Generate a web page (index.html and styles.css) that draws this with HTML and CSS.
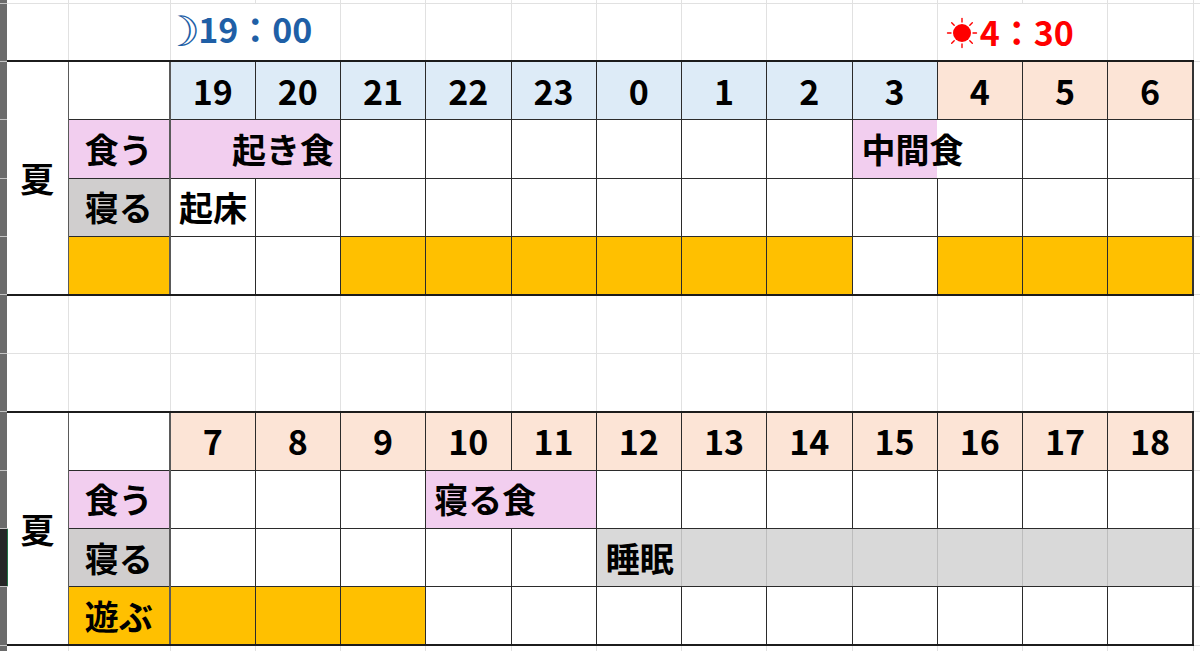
FILE: index.html
```html
<!DOCTYPE html>
<html lang="ja">
<head>
<meta charset="utf-8">
<title>夏 スケジュール</title>
<link rel="stylesheet" href="styles.css">
</head>
<body>
<table class="sheet">
<colgroup>
<col class="w-rh"><col class="w-a"><col class="w-b">
<col class="w-h"><col class="w-h"><col class="w-h"><col class="w-h"><col class="w-h"><col class="w-h">
<col class="w-h"><col class="w-h"><col class="w-h"><col class="w-h"><col class="w-h"><col class="w-h">
<col class="w-x">
</colgroup>
<tbody>
<tr class="top">
<td class="rh"></td><td class="g"></td><td class="g"></td>
<td class="g"></td><td class="g"></td><td class="g"></td><td class="g"></td><td class="g"></td><td class="g"></td>
<td class="g"></td><td class="g"></td><td class="g"></td><td class="g"></td><td class="g"></td><td class="g"></td>
<td class="g"></td>
</tr>
<tr class="r">
<td class="rh"></td><td class="g tb"></td><td class="g tb"></td>
<td class="g tb nr note moon"><span class="moon-g">☽</span>19：00</td>
<td class="g tb"></td><td class="g tb"></td><td class="g tb"></td><td class="g tb"></td><td class="g tb"></td><td class="g tb"></td><td class="g tb"></td><td class="g tb"></td>
<td class="g tb nr note sun"><svg class="sun-ic" width="32" height="32" viewBox="0 0 32 32"><circle cx="16" cy="16" r="9" fill="#ff0000"/><g stroke="#ff0000" stroke-width="1.4" stroke-linecap="round"><line x1="16" y1="1.5" x2="16" y2="5"/><line x1="16" y1="27" x2="16" y2="30.5"/><line x1="1.5" y1="16" x2="5" y2="16"/><line x1="27" y1="16" x2="30.5" y2="16"/><line x1="5.7" y1="5.7" x2="8.2" y2="8.2"/><line x1="23.8" y1="23.8" x2="26.3" y2="26.3"/><line x1="26.3" y1="5.7" x2="23.8" y2="8.2"/><line x1="8.2" y1="23.8" x2="5.7" y2="26.3"/></g></svg>4：30</td>
<td class="g tb"></td><td class="g tb"></td>
<td class="g"></td>
</tr>
<tr class="r">
<td class="rh"></td>
<td class="season" rowspan="4">夏</td>
<td class="c lbl"></td>
<td class="c blue">19</td><td class="c blue">20</td><td class="c blue">21</td><td class="c blue">22</td><td class="c blue">23</td><td class="c blue">0</td>
<td class="c blue">1</td><td class="c blue">2</td><td class="c blue">3</td><td class="c peach">4</td><td class="c peach">5</td><td class="c peach last">6</td>
<td class="g"></td>
</tr>
<tr class="r">
<td class="rh"></td>
<td class="c lbl pink">食う</td>
<td class="c pink ra" colspan="2">起き食</td>
<td class="c"></td><td class="c"></td><td class="c"></td><td class="c"></td><td class="c"></td><td class="c"></td>
<td class="c pink nr la-10">中間食</td>
<td class="c"></td><td class="c"></td><td class="c last"></td>
<td class="g"></td>
</tr>
<tr class="r">
<td class="rh"></td>
<td class="c lbl gray">寝る</td>
<td class="c la-8">起床</td>
<td class="c"></td><td class="c"></td><td class="c"></td><td class="c"></td><td class="c"></td>
<td class="c"></td><td class="c"></td><td class="c"></td><td class="c"></td><td class="c"></td><td class="c last"></td>
<td class="g"></td>
</tr>
<tr class="r">
<td class="rh"></td>
<td class="c lbl orange tb"></td>
<td class="c tb"></td><td class="c tb"></td>
<td class="c orange tb"></td><td class="c orange tb"></td><td class="c orange tb"></td><td class="c orange tb"></td><td class="c orange tb"></td><td class="c orange tb"></td>
<td class="c tb"></td>
<td class="c orange tb"></td><td class="c orange tb"></td><td class="c orange tb last"></td>
<td class="g"></td>
</tr>
<tr class="r">
<td class="rh"></td><td class="g"></td><td class="g"></td>
<td class="g"></td><td class="g"></td><td class="g"></td><td class="g"></td><td class="g"></td><td class="g"></td>
<td class="g"></td><td class="g"></td><td class="g"></td><td class="g"></td><td class="g"></td><td class="g"></td>
<td class="g"></td>
</tr>
<tr class="r">
<td class="rh"></td><td class="g tb"></td><td class="g tb"></td>
<td class="g tb"></td><td class="g tb"></td><td class="g tb"></td><td class="g tb"></td><td class="g tb"></td><td class="g tb"></td>
<td class="g tb"></td><td class="g tb"></td><td class="g tb"></td><td class="g tb"></td><td class="g tb"></td><td class="g tb"></td>
<td class="g"></td>
</tr>
<tr class="r">
<td class="rh"></td>
<td class="season" rowspan="4">夏</td>
<td class="c lbl"></td>
<td class="c peach">7</td><td class="c peach">8</td><td class="c peach">9</td><td class="c peach">10</td><td class="c peach">11</td><td class="c peach">12</td>
<td class="c peach">13</td><td class="c peach">14</td><td class="c peach">15</td><td class="c peach">16</td><td class="c peach">17</td><td class="c peach last">18</td>
<td class="g"></td>
</tr>
<tr class="r">
<td class="rh"></td>
<td class="c lbl pink">食う</td>
<td class="c"></td><td class="c"></td><td class="c"></td>
<td class="c pink la-8" colspan="2">寝る食</td>
<td class="c"></td><td class="c"></td><td class="c"></td><td class="c"></td><td class="c"></td><td class="c"></td>
<td class="c last"></td>
<td class="g"></td>
</tr>
<tr class="r">
<td class="rh sel"></td>
<td class="c lbl gray">寝る</td>
<td class="c"></td><td class="c"></td><td class="c"></td><td class="c"></td><td class="c"></td>
<td class="c sgray lr la-9">睡眠</td>
<td class="c sgray lr"></td><td class="c sgray lr"></td><td class="c sgray lr"></td><td class="c sgray lr"></td><td class="c sgray lr"></td>
<td class="c sgray last"></td>
<td class="g"></td>
</tr>
<tr class="r">
<td class="rh"></td>
<td class="c lbl orange tb">遊ぶ</td>
<td class="c orange tb"></td><td class="c orange tb"></td><td class="c orange tb"></td>
<td class="c tb"></td><td class="c tb"></td><td class="c tb"></td><td class="c tb"></td><td class="c tb"></td><td class="c tb"></td><td class="c tb"></td><td class="c tb"></td>
<td class="c tb last"></td>
<td class="g"></td>
</tr>
<tr class="end">
<td class="rh"></td><td class="g"></td><td class="g"></td>
<td class="g"></td><td class="g"></td><td class="g"></td><td class="g"></td><td class="g"></td><td class="g"></td>
<td class="g"></td><td class="g"></td><td class="g"></td><td class="g"></td><td class="g"></td><td class="g"></td>
<td class="g"></td>
</tr>
</tbody>
</table>
</body>
</html>
```
FILE: styles.css
```css
html, body {
  margin: 0;
  padding: 0;
  background: #ffffff;
  overflow: hidden;
}

.sheet {
  border-collapse: collapse;
  table-layout: fixed;
  width: 1200px;
  font-family: "Noto Sans CJK JP", "Noto Sans", sans-serif;
  font-weight: 700;
  font-size: 34px;
  color: #000000;
}

.w-rh { width: 7px; }
.w-a { width: 61px; }
.w-b { width: 102px; }
.w-h { width: 85.25px; }
.w-x { width: 7px; }

.sheet tr.top { height: 3px; }
.sheet tr.r { height: 58.4px; }
.sheet tr.end { height: 8px; }

.sheet td {
  padding: 0;
  border: none;
  border-right: 1px solid #e1e1e1;
  border-bottom: 1px solid #e1e1e1;
  text-align: center;
  vertical-align: middle;
  white-space: nowrap;
  overflow: visible;
  line-height: 1;
}

.sheet td.rh {
  background: #6b6b6b;
  border-right: none;
  border-bottom: 1px solid #c4c4c4;
}
.sheet td.rh.sel {
  background: #262626;
  border-right: 1px solid #217346;
}

.sheet td.c {
  border-right: 1px solid #2b2b2b;
  border-bottom: 1px solid #2b2b2b;
}
.sheet td.season {
  border-right: 1px solid #5a5a5a;
  border-bottom: 2px solid #1c1c1c;
  background: #ffffff;
}
.sheet td.lbl { border-right: 2px solid #5a5a5a; }
.sheet td.last { border-right: 2px solid #333333; }
.sheet td.tb { border-bottom: 2px solid #1c1c1c; }
.sheet td.nr { border-right: none; }
.sheet td.lr { border-right: 1px solid #bdbdbd; }

.blue { background: #ddebf7; }
.peach { background: #fce4d6; }
.pink { background: #f2ceef; }
.gray { background: #d0cece; }
.sgray { background: #d9d9d9; }
.orange { background: #ffc000; }

.sheet td.ra { text-align: right; padding-right: 6px; }
.sheet td.la-8 { text-align: left; padding-left: 8px; }
.sheet td.la-9 { text-align: left; padding-left: 9px; }
.sheet td.la-10 { text-align: left; padding-left: 9px; }

.sheet td.note { text-align: left; }
.sheet td.moon { color: #1f5fa6; padding-left: 0; }
.sheet td.sun { color: #ff0000; padding-left: 8px; }

.moon-g {
  font-family: "DejaVu Sans", sans-serif;
  font-weight: 400;
  font-size: 42px;
  vertical-align: -3px;
  margin-left: -8px;
  margin-right: -2px;
}
.sun-ic {
  vertical-align: -3px;
  margin-right: 2px;
}
```
